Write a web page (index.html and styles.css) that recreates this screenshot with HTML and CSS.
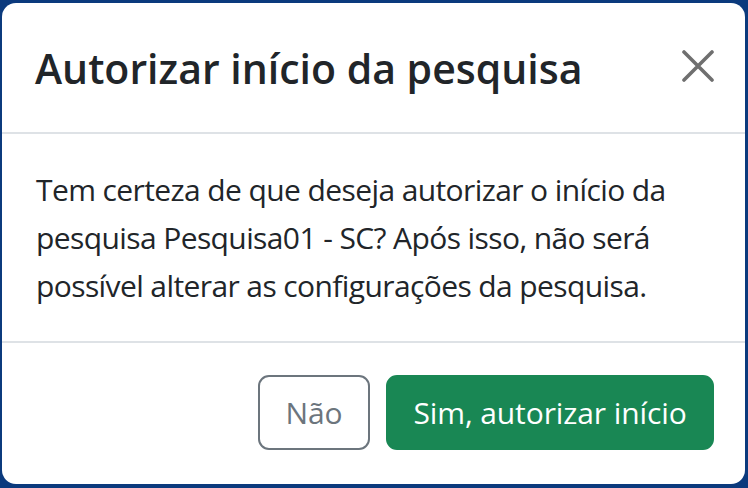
FILE: index.html
```html
<!DOCTYPE html>
<html lang="pt-BR">
<head>
<meta charset="utf-8">
<title>Autorizar início da pesquisa</title>
<link rel="stylesheet" href="styles.css">
</head>
<body>
<div class="modal">
  <div class="modal-header">
    <h5 class="modal-title">Autorizar início da pesquisa</h5>
    <button class="btn-close" type="button" aria-label="Fechar">
      <svg viewBox="0 0 32 32" width="32" height="32"><path d="M2 2L30 30M30 2L2 30" stroke="#6f6f6f" stroke-width="3.6" stroke-linecap="round" fill="none"/></svg>
    </button>
  </div>
  <div class="modal-body">
    <p>Tem certeza de que deseja autorizar o início da<br>pesquisa Pesquisa01 - SC? Após isso, não será<br>possível alterar as configurações da pesquisa.</p>
  </div>
  <div class="modal-footer">
    <button class="btn btn-outline" type="button">Não</button>
    <button class="btn btn-success" type="button">Sim, autorizar início</button>
  </div>
</div>
</body>
</html>
```
FILE: styles.css
```css
html, body {
  margin: 0;
  padding: 0;
  background: #0b3a7d;
  height: 488px;
  overflow: hidden;
}
body {
  font-family: "Open Sans", "Noto Sans", sans-serif;
  color: #212529;
  padding: 3px 3px 4px 2px;
  box-sizing: border-box;
}
.modal {
  background: #fff;
  border-radius: 14px;
  height: 481px;
  display: flex;
  flex-direction: column;
  overflow: hidden;
}
.modal-header {
  height: 131px;
  box-sizing: border-box;
  border-bottom: 2px solid #dee2e6;
  display: flex;
  align-items: center;
  justify-content: space-between;
  padding: 0 31px 0 33px;
}
.modal-title {
  margin: 0;
  font-size: 41px;
  font-weight: 600;
  line-height: 60px;
  letter-spacing: 0;
  white-space: nowrap;
}
.btn-close {
  background: none;
  border: 0;
  padding: 0;
  width: 32px;
  height: 32px;
  display: flex;
  cursor: pointer;
  margin-bottom: 4px;
}
.modal-body {
  height: 209px;
  box-sizing: border-box;
  border-bottom: 2px solid #dee2e6;
  padding: 32px 33px 0 34px;
}
.modal-body p {
  margin: 0;
  font-size: 30px;
  line-height: 48px;
  letter-spacing: -0.6px;
  white-space: nowrap;
}
.modal-footer {
  flex: 1;
  display: flex;
  justify-content: flex-end;
  align-items: center;
  gap: 16px;
  padding: 0 31px 2px 0;
}
.btn {
  height: 75px;
  box-sizing: border-box;
  border-radius: 11px;
  font-family: "Open Sans", "Noto Sans", sans-serif;
  font-size: 30px;
  padding: 0;
  cursor: pointer;
  letter-spacing: -0.1px;
}
.btn-outline {
  background: #fff;
  color: #6c757d;
  border: 2px solid #6c757d;
  width: 112px;
}
.btn-success {
  background: #198754;
  color: #fff;
  border: 2px solid #198754;
  width: 328px;
}
```
